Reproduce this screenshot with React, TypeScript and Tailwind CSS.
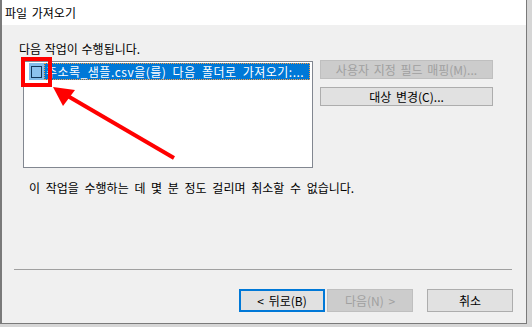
import React from "react";

const font = "font-['Noto_Sans_CJK_KR','Liberation_Sans',sans-serif]";

function Btn({ label, disabled, primary, className = "" }: { label: string; disabled?: boolean; primary?: boolean; className?: string }) {
  const look = disabled
    ? "bg-[#cccccc] border border-[#bfbfbf] text-[#a0a0a0]"
    : primary
    ? "bg-[#e1e1e1] border-2 border-[#0078d7] text-black"
    : "bg-[#e1e1e1] border border-[#adadad] text-black";
  return (
    <div className={`flex items-center justify-center text-[12px] leading-[15px] whitespace-nowrap [word-spacing:2px] ${look} ${className}`}>
      {label}
    </div>
  );
}

export default function App() {
  return (
    <div className={`relative w-[532px] h-[327px] bg-[#d6d6d6] overflow-hidden ${font}`}>
      {/* dialog window */}
      <div className="flex flex-col w-[527px] h-[324px] bg-[#f0f0f0] border-l-2 border-r border-b border-[#7a7a7a]">
        <div className="flex items-center h-[25px] bg-white pl-[3px] text-[12px] leading-[15px] text-black [word-spacing:2px]">
          파일 가져오기
        </div>

        <div className="ml-[17px] mt-[16px] text-[12px] leading-[15px] text-black [word-spacing:1px]">다음 작업이 수행됩니다.</div>

        <div className="flex items-start ml-[21px] mt-[4px]">
          {/* task list */}
          <div className="mt-[1px] w-[290px] h-[107px] bg-white border border-[#828790] pt-[1px]">
            <div className="flex h-[17px]">
              <div className="w-[5px]" />
              <div className="flex items-center justify-center w-[15px] h-[17px] bg-[#84bdeb]">
                <div className="w-[11px] h-[12px] border border-[#12365a] bg-[#8cc2ee]" />
              </div>
              <div className="flex items-center w-[266px] h-[17px] bg-[#0078d7] border border-dotted border-[#ff9a3c] pl-[1px] text-[12px] leading-[15px] text-white whitespace-nowrap overflow-hidden tracking-[0.5px] [word-spacing:3px]">
                주소록_샘플.csv을(를) 다음 폴더로 가져오기:...
              </div>
            </div>
          </div>

          <div className="flex flex-col gap-[8px] ml-[7px]">
            <Btn label="사용자 지정 필드 매핑(M)..." disabled className="w-[173px] h-[19px]" />
            <Btn label="대상 변경(C)..." className="w-[173px] h-[19px]" />
          </div>
        </div>

        <div className="ml-[27px] mt-[12px] text-[12px] leading-[15px] text-black [word-spacing:3px]">
          이 작업을 수행하는 데 몇 분 정도 걸리며 취소할 수 없습니다.
        </div>

        <div className="ml-[12px] mt-[74px] w-[498px] h-px bg-[#a0a0a0]" />

        <div className="flex mt-[19px] ml-[237px]">
          <Btn label="< 뒤로(B)" primary className="w-[86px] h-[23px]" />
          <Btn label="다음(N) >" disabled className="w-[86px] h-[23px] ml-[2px]" />
          <Btn label="취소" className="w-[86px] h-[23px] ml-[14px]" />
        </div>
      </div>

      {/* annotation: red box + arrow */}
      <div className="absolute left-[21px] top-[57px] w-[31px] h-[30px] border-4 border-[#ff0000] pointer-events-none" />
      <svg className="absolute left-0 top-0 pointer-events-none" width="532" height="327" viewBox="0 0 532 327">
        <line x1="174" y1="158" x2="66" y2="95" stroke="#ff0000" strokeWidth="4" />
        <polygon points="53,87 75,90 63,106" fill="#ff0000" />
      </svg>
    </div>
  );
}
